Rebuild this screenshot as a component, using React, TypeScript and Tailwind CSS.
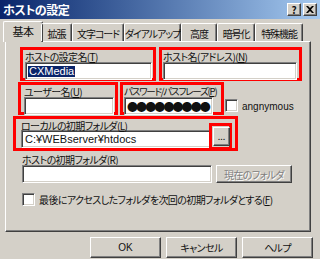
import React from "react"

const tabs = [
  { label: "基本", w: "w-[40px]", active: true },
  { label: "拡張", w: "w-[31px]" },
  { label: "文字コード", w: "w-[52px]" },
  { label: "ダイアルアップ", w: "w-[57px]" },
  { label: "高度", w: "w-[36px]" },
  { label: "暗号化", w: "w-[38px]" },
  { label: "特殊機能", w: "w-[48px]" },
]

const sunken =
  "bg-white border border-t-[#808080] border-l-[#808080] border-b-white border-r-white shadow-[inset_1px_1px_0_#404040,inset_-1px_-1px_0_#d4d0c8]"
const raised =
  "bg-[#d4d0c8] border border-t-white border-l-white border-b-[#404040] border-r-[#404040] shadow-[inset_-1px_-1px_0_#808080,inset_1px_1px_0_#d4d0c8]"

function Check({ className = "" }: { className?: string }) {
  return <div className={`w-[13px] h-[13px] shrink-0 ${sunken} ${className}`} />
}

function U({ c }: { c: string }) {
  return <span className="underline">{c}</span>
}

export default function App() {
  return (
    <div
      className="w-[320px] h-[259px] bg-[#d4d0c8] overflow-hidden text-[10px] leading-[11px] text-[#111] [font-feature-settings:'palt'] tracking-[-0.6px] whitespace-nowrap"
      style={{ fontFamily: '"Noto Sans CJK JP", "Liberation Sans", sans-serif' }}
    >
      {/* title bar */}
      <div className="h-[19px] flex items-center justify-between bg-gradient-to-r from-[#0a246a] to-[#a6caf0] pl-[3px] pr-[3px]">
        <span className="text-white font-bold text-[12px] leading-[12px] tracking-[-0.5px]">ホストの設定</span>
        <div className="flex gap-[2px]">
          <div className={`w-[14px] h-[13px] flex items-center justify-center font-bold text-[10px] tracking-[0px] ${raised}`}>?</div>
          <div className={`w-[14px] h-[13px] flex items-center justify-center ${raised}`}>
            <svg width="8" height="7" viewBox="0 0 8 7">
              <path d="M0 0h2l2 2 2-2h2L5 3.5 8 7H6L4 5 2 7H0l3-3.5z" fill="#000" />
            </svg>
          </div>
        </div>
      </div>

      {/* tabs */}
      <div className="flex items-end pl-[5px] mt-[1px] h-[21px] relative z-10">
        {tabs.map((t) =>
          t.active ? (
            <div
              key={t.label}
              className={`${t.w} h-[21px] -mb-[1px] -mx-[2px] px-[2px] bg-[#d4d0c8] border-l border-t border-white border-r border-r-[#404040] rounded-t-[2px] flex items-center justify-center pb-[2px] shadow-[inset_-1px_0_0_#808080] text-[11px]`}
            >
              {t.label}
            </div>
          ) : (
            <div
              key={t.label}
              className={`${t.w} h-[18px] border-l border-t border-white border-r border-r-[#404040] rounded-t-[2px] flex items-center justify-center pt-[1px] shadow-[inset_-1px_0_0_#808080] tracking-[-1.1px]`}
            >
              {t.label}
            </div>
          )
        )}
      </div>

      {/* panel */}
      <div className="ml-[5px] w-[306px] h-[191px] border border-t-white border-l-white border-r-[#404040] border-b-[#404040] shadow-[inset_-1px_-1px_0_#808080] pt-[5px]">
        <div className="flex ml-[14px]">
          <div className="w-[136px] h-[34px] border-[3px] border-[#ff0000] pl-[2px] pr-[1px]">
            <div className="h-[12px] pt-[1px]">ホストの設定名(<U c="T" />)</div>
            <div className={`h-[18px] ${sunken} flex items-center pl-[2px]`}>
              <span className="bg-[#0a246a] text-white px-[1px] text-[11px] tracking-[0px]" style={{ fontFamily: '"Liberation Sans", sans-serif' }}>CXMedia</span>
            </div>
          </div>
          <div className="ml-[3px] w-[143px] h-[34px] border-[3px] border-[#ff0000] pl-[1px] pr-[2px]">
            <div className="h-[12px] pt-[1px]">ホスト名(アドレス)(<U c="N" />)</div>
            <div className={`h-[18px] ${sunken}`} />
          </div>
        </div>

        <div className="flex items-start ml-[12px] mt-[1px]">
          <div className="w-[100px] h-[33px] border-[3px] border-[#ff0000] pl-[3px] pr-[1px]">
            <div className="h-[12px] pt-[1px]">ユーザー名(<U c="U" />)</div>
            <div className={`h-[18px] ${sunken}`} />
          </div>
          <div className="ml-[2px] w-[104px] h-[33px] border-[3px] border-[#ff0000] pl-[1px]">
            <div className="h-[12px] pt-[1px] text-[9.5px] tracking-[-1.2px]">パスワード/パスフレーズ(<U c="P" />)</div>
            <div className={`w-[89px] h-[18px] ${sunken} flex items-center pl-[2px] text-[11px] tracking-[-1.9px] overflow-hidden`}>
              ●●●●●●●●●
            </div>
          </div>
          <Check className="ml-[1px] mt-[17px]" />
          <span className="ml-[4px] mt-[19px] tracking-[0px]" style={{ fontFamily: '"Liberation Sans", sans-serif' }}>
            angnymous
          </span>
        </div>

        <div className="relative ml-[7px] mt-[1px] w-[225px] h-[35px] border-[3px] border-[#ff0000] pl-[5px]">
          <div className="h-[11px] pt-[1px]">ローカルの初期フォルダ(<U c="L" />)</div>
          <div className={`w-[190px] h-[18px] ${sunken} flex items-center pl-[3px] text-[11px] tracking-[0px]`} style={{ fontFamily: '"Liberation Sans", "Noto Sans CJK JP", sans-serif' }}>
            C:¥WEBserver¥htdocs
          </div>
          <div className="absolute left-[193px] top-[4px] w-[23px] h-[27px] border-[3px] border-[#ff0000] pl-[1px] pt-[1px]">
            <div className={`w-[17px] h-[19px] ${raised} flex items-end justify-center pb-[4px] text-[9px] leading-[9px] tracking-[0px]`}>...</div>
          </div>
        </div>

        <div className="ml-[16px] mt-[3px]">
          <div className="h-[11px]">ホストの初期フォルダ(<U c="R" />)</div>
          <div className="flex items-center">
            <div className={`w-[190px] h-[18px] ${sunken}`} />
            <div className={`ml-[4px] w-[76px] h-[18px] ${raised} flex items-center justify-center text-[#808080] [text-shadow:1px_1px_0_#fff]`}>
              現在のフォルダ
            </div>
          </div>
        </div>

        <div className="flex items-center ml-[16px] mt-[10px]">
          <Check />
          <span className="ml-[4px]">最後にアクセスしたフォルダを次回の初期フォルダとする(<U c="F" />)</span>
        </div>
      </div>

      {/* buttons */}
      <div className="flex ml-[90px] mt-[5px] gap-[5px]">
        <div className={`w-[71px] h-[21px] ${raised} flex items-center justify-center tracking-[0px]`} style={{ fontFamily: '"Liberation Sans", sans-serif' }}>OK</div>
        <div className={`w-[71px] h-[21px] ${raised} flex items-center justify-center`}>キャンセル</div>
        <div className={`w-[71px] h-[21px] ${raised} flex items-center justify-center`}>ヘルプ</div>
      </div>
    </div>
  )
}
